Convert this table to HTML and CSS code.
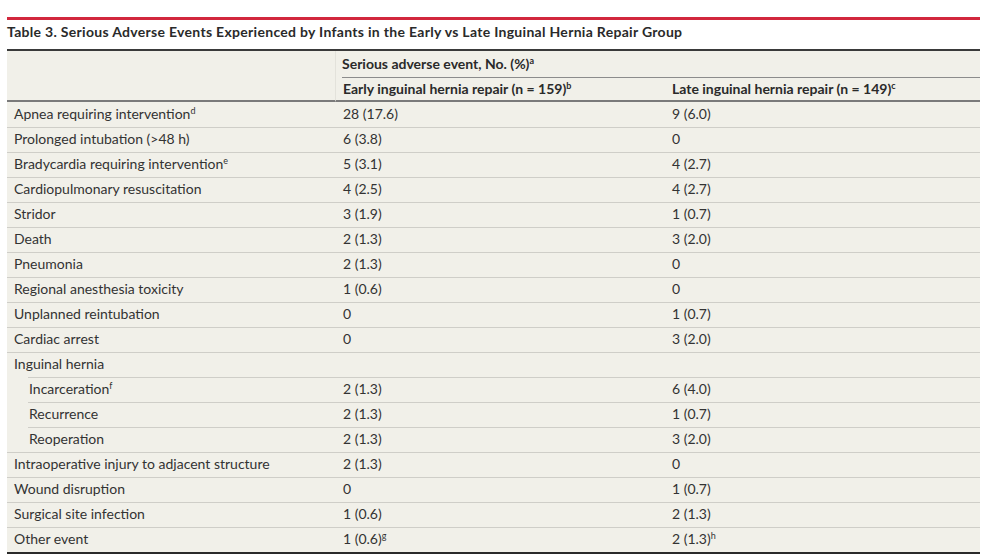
FILE: index.html
```html
<!DOCTYPE html>
<html lang="en">
<head>
<meta charset="utf-8">
<title>Table 3</title>
<link rel="stylesheet" href="styles.css">
</head>
<body>
<div class="page">
  <div class="rule"></div>
  <h2 class="title">Table 3. Serious Adverse Events Experienced by Infants in the Early vs Late Inguinal Hernia Repair Group</h2>
  <table class="data">
    <colgroup>
      <col class="c1">
      <col class="c2">
      <col class="c3">
    </colgroup>
    <thead>
      <tr class="h1">
        <th class="blank" rowspan="2"></th>
        <th class="span" colspan="2"><div class="span-in">Serious adverse event, No. (%)<sup>a</sup></div></th>
      </tr>
      <tr class="h2">
        <th>Early inguinal hernia repair (n = 159)<sup>b</sup></th>
        <th>Late inguinal hernia repair (n = 149)<sup>c</sup></th>
      </tr>
    </thead>
    <tbody>
      <tr><td>Apnea requiring intervention<sup>d</sup></td><td>28 (17.6)</td><td>9 (6.0)</td></tr>
      <tr><td>Prolonged intubation (&gt;48 h)</td><td>6 (3.8)</td><td>0</td></tr>
      <tr><td>Bradycardia requiring intervention<sup>e</sup></td><td>5 (3.1)</td><td>4 (2.7)</td></tr>
      <tr><td>Cardiopulmonary resuscitation</td><td>4 (2.5)</td><td>4 (2.7)</td></tr>
      <tr><td>Stridor</td><td>3 (1.9)</td><td>1 (0.7)</td></tr>
      <tr><td>Death</td><td>2 (1.3)</td><td>3 (2.0)</td></tr>
      <tr><td>Pneumonia</td><td>2 (1.3)</td><td>0</td></tr>
      <tr><td>Regional anesthesia toxicity</td><td>1 (0.6)</td><td>0</td></tr>
      <tr><td>Unplanned reintubation</td><td>0</td><td>1 (0.7)</td></tr>
      <tr><td>Cardiac arrest</td><td>0</td><td>3 (2.0)</td></tr>
      <tr><td>Inguinal hernia</td><td></td><td></td></tr>
      <tr class="sub"><td>Incarceration<sup>f</sup></td><td>2 (1.3)</td><td>6 (4.0)</td></tr>
      <tr class="sub"><td>Recurrence</td><td>2 (1.3)</td><td>1 (0.7)</td></tr>
      <tr class="sub"><td>Reoperation</td><td>2 (1.3)</td><td>3 (2.0)</td></tr>
      <tr><td>Intraoperative injury to adjacent structure</td><td>2 (1.3)</td><td>0</td></tr>
      <tr><td>Wound disruption</td><td>0</td><td>1 (0.7)</td></tr>
      <tr><td>Surgical site infection</td><td>1 (0.6)</td><td>2 (1.3)</td></tr>
      <tr><td>Other event</td><td>1 (0.6)<sup>g</sup></td><td>2 (1.3)<sup>h</sup></td></tr>
    </tbody>
  </table>
</div>
</body>
</html>
```
FILE: styles.css
```css
html, body {
  margin: 0;
  padding: 0;
  background: #ffffff;
}

body {
  font-family: "Lato", "Liberation Sans", sans-serif;
  color: #333333;
}

.page {
  width: 973px;
  padding: 17px 0 0 7px;
}

.rule {
  height: 3px;
  background: #d2283d;
}

.title {
  margin: 0;
  height: 29px;
  box-sizing: border-box;
  padding-top: 3px;
  font-size: 14px;
  line-height: 18px;
  font-weight: 700;
  letter-spacing: 0.3px;
  color: #2a2a2a;
  white-space: nowrap;
}

.data {
  width: 973px;
  border-collapse: separate;
  border-spacing: 0;
  table-layout: fixed;
  background: #f1f0e9;
  border-top: 2px solid #3a3a3a;
  border-bottom: 2px solid #2a2a2a;
  font-size: 14px;
}

.c1 { width: 329px; }
.c2 { width: 329px; }
.c3 { width: 315px; }

th, td {
  text-align: left;
  vertical-align: middle;
  line-height: 17px;
  padding: 0 0 0 7px;
  white-space: nowrap;
}

th {
  font-weight: 700;
  color: #2a2a2a;
}

.h1 th.blank {
  border-right: 1px solid #e3e2db;
  border-bottom: 2px solid #7a7a7a;
}

.h1 th.span {
  padding: 0;
}

.span-in {
  margin-left: 6px;
  padding: 4px 0 5px 0;
  border-bottom: 1px solid #8c8c8c;
}

.h2 th {
  padding-top: 2px;
  padding-bottom: 3px;
  border-bottom: 2px solid #7a7a7a;
}

tbody td {
  padding-top: 2px;
  padding-bottom: 5px;
  border-top: 1px solid #cfcec8;
}

tbody tr:first-child td {
  border-top: none;
  padding-top: 3px;
}

tbody tr.sub td:first-child {
  padding-left: 22px;
  border-top: none;
  padding-top: 3px;
  background-image: linear-gradient(#cfcec8, #cfcec8);
  background-size: calc(100% - 21px) 1px;
  background-position: 21px 0;
  background-repeat: no-repeat;
}

sup {
  font-size: 9px;
  line-height: 0;
  vertical-align: 5px;
}
```
